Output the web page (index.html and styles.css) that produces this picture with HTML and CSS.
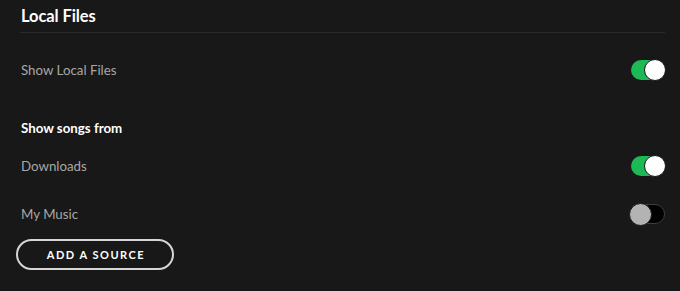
FILE: index.html
```html
<!DOCTYPE html>
<html>
<head>
<meta charset="utf-8">
<link rel="stylesheet" href="styles.css">
</head>
<body>
<div class="page">
  <div class="header"><h1 class="title">Local Files</h1></div>
  <div class="row first">
    <span class="label">Show Local Files</span>
    <span class="toggle on"><span class="knob"></span></span>
  </div>
  <div class="subhead">Show songs from</div>
  <div class="row">
    <span class="label">Downloads</span>
    <span class="toggle on"><span class="knob"></span></span>
  </div>
  <div class="row">
    <span class="label">My Music</span>
    <span class="toggle off"><span class="knob"></span></span>
  </div>
  <button class="btn">ADD A SOURCE</button>
</div>
</body>
</html>
```

FILE: styles.css
```css
html, body {
  margin: 0;
  padding: 0;
  background: #181818;
  height: 100%;
}
.page {
  font-family: Lato, "Liberation Sans", sans-serif;
  padding: 0 15px 0 16px;
  box-sizing: border-box;
  width: 680px;
}
.header {
  margin-left: 4px;
  height: 33px;
  border-bottom: 1px solid #2a2a2a;
  box-sizing: border-box;
  display: flex;
  align-items: center;
}
.title {
  margin: 0 0 0 1px;
  font-size: 16.5px;
  font-weight: 700;
  color: #ffffff;
  letter-spacing: -0.1px;
  line-height: 18px;
}
.row {
  display: flex;
  align-items: center;
  justify-content: space-between;
  height: 48px;
  margin-left: 5px;
}
.row.first {
  margin-top: 13px;
}
.label {
  font-size: 13.3px;
  color: #a7a7a7;
}
.subhead {
  margin-left: 5px;
  margin-top: 24px;
  height: 24px;
  line-height: 20px;
  font-size: 13.3px;
  font-weight: 700;
  color: #ffffff;
}
.toggle {
  position: relative;
  width: 34px;
  height: 20px;
  border-radius: 10px;
  box-sizing: border-box;
  flex: none;
}
.toggle.on {
  background: #1db954;
}
.toggle.off {
  background: #000000;
  border: 1.5px solid #3e3e3e;
}
.knob {
  position: absolute;
  top: -1px;
  width: 20px;
  height: 20px;
  border-radius: 50%;
  border: 1px solid #181818;
}
.toggle.on .knob {
  right: -1px;
  background: #ffffff;
}
.toggle.off .knob {
  left: -3px;
  top: -2.5px;
  width: 21px;
  height: 21px;
  background: #b3b3b3;
}
.btn {
  display: block;
  margin-top: 1px;
  width: 158px;
  height: 31px;
  border: 2px solid #d6d6d6;
  border-radius: 16px;
  background: transparent;
  color: #ffffff;
  font-family: Lato, "Liberation Sans", sans-serif;
  font-size: 11px;
  font-weight: 700;
  letter-spacing: 1.5px;
  padding: 0 0 0 2px;
}
```
